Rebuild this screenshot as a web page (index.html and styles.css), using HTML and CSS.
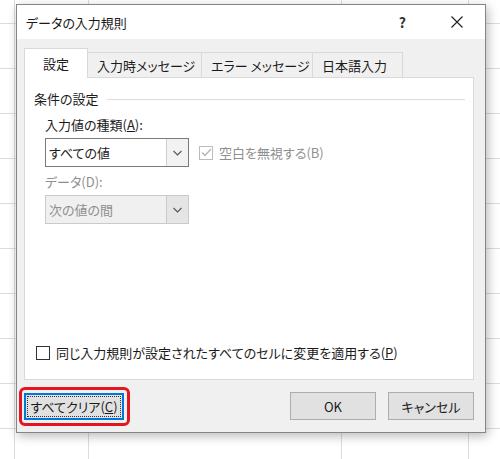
FILE: index.html
```html
<!DOCTYPE html>
<html lang="ja">
<head>
    <meta charset="UTF-8">
    <title>データの入力規則</title>
    <link rel="stylesheet" href="styles.css">
</head>
<body>
    <div class="dialog">
        <div class="titlebar">
            <span class="title">データの入力規則</span>
            <span class="help">?</span>
            <span class="close">
                <svg width="12" height="12" viewBox="0 0 12 12"><path d="M0.5 0.5 L11.5 11.5 M11.5 0.5 L0.5 11.5" stroke="#222" stroke-width="1.2" fill="none"/></svg>
            </span>
        </div>

        <div class="body">
            <div class="tabs">
                <div class="tab active">設定</div>
                <div class="tab">入力時メッセージ</div>
                <div class="tab">エラー メッセージ</div>
                <div class="tab">日本語入力</div>
            </div>

            <div class="panel">
                <div class="group-head">
                    <span>条件の設定</span>
                    <div class="rule"></div>
                </div>

                <div class="fields">
                    <div class="label">入力値の種類(<u>A</u>):</div>
                    <div class="row">
                        <div class="combo">
                            <span class="value">すべての値</span>
                            <span class="drop">
                                <svg width="9" height="6" viewBox="0 0 9 6"><path d="M0.5 1 L4.5 5 L8.5 1" stroke="#555" stroke-width="1.1" fill="none"/></svg>
                            </span>
                        </div>
                        <div class="check disabled">
                            <span class="box">
                                <svg width="11" height="9" viewBox="0 0 11 9"><path d="M1 4.5 L4 7.5 L10 1" stroke="#b5b5b5" stroke-width="1.3" fill="none"/></svg>
                            </span>
                            <span>空白を無視する(B)</span>
                        </div>
                    </div>

                    <div class="label dim">データ(D):</div>
                    <div class="combo off">
                        <span class="value">次の値の間</span>
                        <span class="drop">
                            <svg width="9" height="6" viewBox="0 0 9 6"><path d="M0.5 1 L4.5 5 L8.5 1" stroke="#555" stroke-width="1.1" fill="none"/></svg>
                        </span>
                    </div>
                </div>

                <div class="check apply">
                    <span class="box"></span>
                    <span>同じ入力規則が設定されたすべてのセルに変更を適用する(<u>P</u>)</span>
                </div>
            </div>

            <div class="buttons">
                <button class="btn clear"><span class="focus">すべてクリア(<u>C</u>)</span></button>
                <button class="btn">OK</button>
                <button class="btn">キャンセル</button>
            </div>
        </div>
    </div>
</body>
</html>
```

FILE: styles.css
```css
/* sheet grid behind the dialog */
html, body {
    margin: 0;
    height: 100%;
}

body {
    width: 500px;
    height: 459px;
    overflow: hidden;
    font-family: "Noto Sans CJK JP", "Noto Sans", sans-serif;
    font-feature-settings: "palt";
    font-size: 13px;
    color: #1b1b1b;
    background-color: #fff;
    background-image:
        linear-gradient(#dcdcdc, #dcdcdc),
        linear-gradient(#dcdcdc, #dcdcdc),
        linear-gradient(#dcdcdc, #dcdcdc),
        linear-gradient(#dcdcdc, #dcdcdc),
        repeating-linear-gradient(to bottom, transparent 0, transparent 23px, #dcdcdc 23px, #dcdcdc 24px, transparent 24px, transparent 45px);
    background-size: 1px 100%, 1px 100%, 1px 100%, 1px 100%, 100% 100%;
    background-position: 14px 0, 88px 0, 341px 0, 468px 0, 0 0;
    background-repeat: no-repeat;
}

.dialog {
    box-sizing: border-box;
    margin: 4px 0 0 16px;
    width: 470px;
    height: 429px;
    border: 1px solid #858585;
    background: #f0f0f0;
    display: flex;
    flex-direction: column;
    box-shadow: 2px 3px 10px rgba(0, 0, 0, 0.28);
}

.titlebar {
    height: 35px;
    background: #fff;
    display: flex;
    align-items: center;
    padding-left: 9px;
}

.title {
    flex: 1;
    font-size: 13px;
}

.help {
    font-size: 14px;
    font-weight: bold;
    color: #333;
    margin-right: 45px;
}

.close {
    display: flex;
    margin-right: 22px;
}

.body {
    flex: 1;
    padding: 10px 11px 12px 7px;
    display: flex;
    flex-direction: column;
}

/* tab strip */
.tabs {
    display: flex;
    align-items: flex-end;
    height: 29px;
    position: relative;
    z-index: 1;
    margin-bottom: -1px;
}

.tab {
    box-sizing: border-box;
    height: 26px;
    padding: 0 9px;
    display: flex;
    align-items: center;
    border: 1px solid #d9d9d9;
    border-left: none;
    background: #f0f0f0;
    white-space: nowrap;
}

.tab:nth-child(2) { width: 114px; }
.tab:nth-child(3) { width: 111px; }
.tab:nth-child(4) { width: 90px; }

.tab.active {
    width: 64px;
    height: 30px;
    justify-content: center;
    background: #fff;
    border-left: 1px solid #d9d9d9;
    border-bottom: none;
}

.panel {
    box-sizing: border-box;
    height: 303px;
    background: #fff;
    border: 1px solid #d9d9d9;
    padding: 11px 8px 17px 9px;
    display: flex;
    flex-direction: column;
}

.group-head {
    display: flex;
    align-items: center;
    gap: 8px;
}

.rule {
    flex: 1;
    height: 1px;
    background: #dcdcdc;
    margin-top: 1px;
}

.fields {
    flex: 1;
    padding: 8px 0 0 11px;
}

.label {
    line-height: 18px;
    margin-bottom: 4px;
}

.dim {
    color: #8f8f8f;
}

.row {
    display: flex;
    align-items: center;
    margin-bottom: 6px;
}

.combo {
    box-sizing: border-box;
    width: 144px;
    height: 29px;
    border: 1px solid #7a7a7a;
    background: #fff;
    display: flex;
    align-items: stretch;
}

.combo .value {
    flex: 1;
    display: flex;
    align-items: center;
    padding-left: 3px;
}

.combo .drop {
    width: 21px;
    border-left: 1px solid #cfcfcf;
    background: #f2f2f2;
    display: flex;
    align-items: center;
    justify-content: center;
}

.combo.off {
    border-color: #cacaca;
    background: #f0f0f0;
    color: #8f8f8f;
}

.combo.off .drop {
    background: #e5e5e5;
    border-left-color: #cacaca;
}

.check {
    display: flex;
    align-items: center;
    gap: 6px;
}

.check .box {
    box-sizing: border-box;
    width: 14px;
    height: 14px;
    border: 1px solid #333;
    background: #fff;
    display: flex;
    align-items: center;
    justify-content: center;
}

.check.disabled {
    margin-left: 10px;
    color: #8f8f8f;
}

.check.disabled .box {
    border-color: #bcbcbc;
}

.check.apply {
    margin-left: 2px;
}

/* bottom button row */
.buttons {
    display: flex;
    align-items: center;
    gap: 12px;
    margin-top: 12px;
}

.btn {
    box-sizing: border-box;
    width: 86px;
    height: 28px;
    border: 1px solid #adadad;
    background: #e1e1e1;
    font: inherit;
    color: #1b1b1b;
    padding: 0;
}

.btn:nth-child(2) {
    margin-left: auto;
}

.btn.clear {
    position: relative;
    width: 100px;
    height: 27px;
    border: 2px solid #0078d7;
    padding: 1px;
}

.btn.clear .focus {
    display: flex;
    align-items: center;
    justify-content: center;
    height: 100%;
    border: 1px dotted #333;
    box-sizing: border-box;
}

/* red marker ring round the clear button */
.btn.clear::after {
    content: "";
    position: absolute;
    top: -8px;
    bottom: -8px;
    left: -7px;
    right: -8px;
    border: 3px solid #e3151f;
    border-radius: 6px;
}
```
